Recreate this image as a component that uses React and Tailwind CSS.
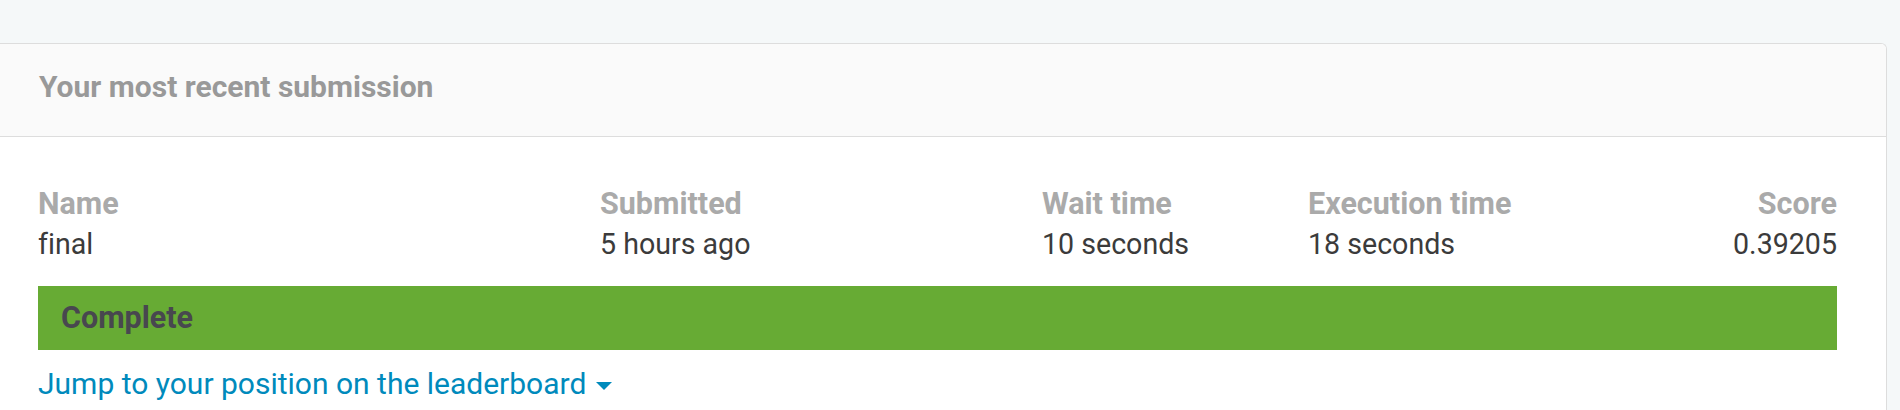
const cols = [
  { label: 'Name', value: 'final' },
  { label: 'Submitted', value: '5 hours ago' },
  { label: 'Wait time', value: '10 seconds' },
  { label: 'Execution time', value: '18 seconds' },
];

const App = () => {
  return (
    <div className="min-h-screen bg-[#f5f8f9] pt-[43px] pr-[13px] font-['Roboto',sans-serif] [font-variant-ligatures:none]">
      <div className="h-[367px] overflow-hidden rounded-tr-[6px] border-t border-r border-[#dddddd] bg-white">
        <div className="border-b border-[#dddddd] bg-[#fafafa] pt-[25px] pb-[31px] pl-[39px]">
          <h2 className="text-[30px] leading-[36px] font-bold text-[#999999]">Your most recent submission</h2>
        </div>

        <div className="pt-[47px] pl-[38px] pr-[49px]">
          <div className="grid grid-cols-[562px_442px_266px_1fr_auto] leading-[40px]">
            {cols.map(c => (
              <div key={c.label}>
                <div className="text-[30.5px] font-bold text-[#aaaaaa]">{c.label}</div>
                <div className="text-[28.6px] text-[#3b3b3b]">{c.value}</div>
              </div>
            ))}
            <div className="text-right">
              <div className="text-[30.5px] font-bold text-[#aaaaaa]">Score</div>
              <div className="text-[28.6px] text-[#3b3b3b]">0.39205</div>
            </div>
          </div>

          <div className="mt-[22px] flex h-[64px] items-center bg-[#67ab34] pl-[23px]">
            <span className="text-[30.5px] leading-[36px] font-bold text-[#48474f]">Complete</span>
          </div>

          <a href="#" className="mt-[14px] inline-flex items-center gap-[10px] text-[30px] leading-[40px] text-[#008abc]">
            Jump to your position on the leaderboard
            <svg width="16" height="9" viewBox="0 0 16 9" className="mt-[4px]">
              <path d="M0 0h16L8 8z" fill="currentColor" />
            </svg>
          </a>
        </div>
      </div>
    </div>
  );
};

export default App;
